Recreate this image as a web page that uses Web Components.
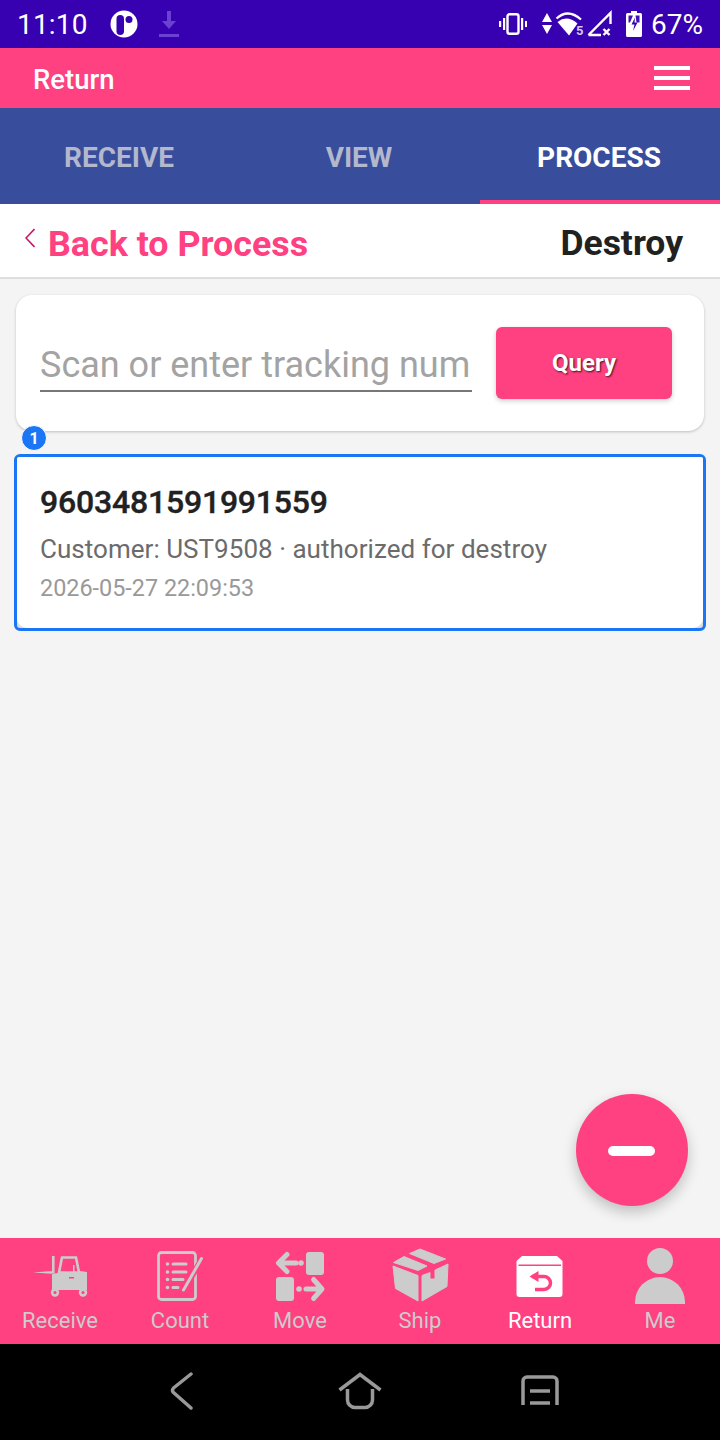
<!DOCTYPE html>
<html lang="en">
<head>
<meta charset="utf-8">
<title>Return</title>
<style>
    html, body { margin: 0; padding: 0; }
    body { font-family: Roboto, "Liberation Sans", sans-serif; background: #f4f4f4; }
    #page { display: flex; flex-direction: column; width: 720px; height: 1440px; overflow: hidden; }
    #content { flex: 1; display: flex; flex-direction: column; position: relative; min-height: 0; }
</style>
</head>
<body>
<div id="page">
    <status-bar></status-bar>
    <app-bar>Return</app-bar>
    <tab-bar></tab-bar>
    <back-header title-text="Destroy">Back to Process</back-header>
    <div id="content">
        <search-card></search-card>
        <result-card index="1" tracking="9603481591991559" info="Customer: UST9508 · authorized for destroy" time="2026-05-27 22:09:53"></result-card>
        <fab-button></fab-button>
    </div>
    <bottom-nav></bottom-nav>
    <system-nav></system-nav>
</div>

<script>
class StatusBar extends HTMLElement {
    connectedCallback() {
        this.attachShadow({ mode: "open" });
        this.shadowRoot.innerHTML = `
            <style>
                :host { display: flex; align-items: center; height: 48px; background: #3700b0; color: #fff; font-size: 28px; flex: none; }
                .time { margin-left: 17px; letter-spacing: 0.2px; }
                .left { display: flex; align-items: center; }
                .right { margin-left: auto; display: flex; align-items: center; margin-right: 17px; }
                svg { display: block; overflow: visible; }
            </style>
            <div class="left">
                <span class="time">11:10</span>
                <svg style="margin-left:22px" width="28" height="28" viewBox="0 0 28 28">
                    <circle cx="14" cy="14" r="13.500" fill="#fff"/>
                    <rect x="6.500" y="5" width="7.500" height="20" rx="3.750" fill="#3700b0"/>
                    <circle cx="19" cy="9.500" r="3.500" fill="#3700b0"/>
                </svg>
                <svg style="margin-left:21px" width="20" height="27" viewBox="0 0 20 27">
                    <path d="M8 0 h4 v10 h5 l-7 8 -7 -8 h5 z" fill="#6b41d3"/>
                    <rect y="23" width="20" height="3" fill="#6b41d3"/>
                </svg>
            </div>
            <div class="right">
                <svg width="28" height="22" viewBox="0 0 28 22">
                    <rect x="8.500" y="1.200" width="11" height="19.600" rx="2" fill="none" stroke="#fff" stroke-width="2.400"/>
                    <path d="M4 5 h2.200 v12 h-2.200 z M22 5 h2.200 v12 h-2.200 z M0 8 h2.200 v6 h-2.200 z M26 8 h2 v6 h-2 z" fill="#fff"/>
                </svg>
                <svg style="margin-left:15px" width="10" height="22" viewBox="0 0 10 22">
                    <path d="M5 0 l5 9 h-10 z M0 12 h10 l-5 9 z" fill="#fff"/>
                </svg>
                <svg style="margin-left:3px" width="29" height="26" viewBox="0 0 29 26">
                    <path d="M1.500 7.500 Q13 -3 26 8.500" fill="none" stroke="#fff" stroke-width="2.200"/>
                    <path d="M2.500 11 Q12 3.500 22.500 12.500 L14 24.500 z" fill="#fff"/>
                    <text x="21" y="23.500" font-family="Roboto, sans-serif" font-size="13" font-weight="700" fill="#d5c8f2">5</text>
                </svg>
                <svg style="margin-left:3px" width="25" height="26" viewBox="0 0 25 26">
                    <path d="M1.500 24 L23.500 2 V13 M1.500 24 H14" fill="none" stroke="#fff" stroke-width="2.400"/>
                    <path d="M16.500 18 l6 6 M22.500 18 l-6 6" stroke="#fff" stroke-width="2.400"/>
                </svg>
                <svg style="margin-left:14px" width="16" height="26" viewBox="0 0 16 26">
                    <path d="M5 0 h6 v2 h3.500 a1.500 1.500 0 0 1 1.500 1.500 v21 a1.500 1.500 0 0 1 -1.500 1.500 h-13 a1.500 1.500 0 0 1 -1.500 -1.500 v-21 a1.500 1.500 0 0 1 1.500 -1.500 h3.500 z" fill="#fff"/>
                    <path d="M2.500 4.500 h4.500 l-3 7 h-1.500 z M9.500 4.500 h4 v7 h-3 z" fill="#3f10b5"/>
                    <path d="M9 6.500 L5.500 13.500 h3 l-1.500 6.500 L11.500 11.500 h-3 z" fill="#3700b0"/>
                </svg>
                <span style="margin-left:9px">67%</span>
            </div>
        `;
    }
}

class AppBar extends HTMLElement {
    connectedCallback() {
        this.attachShadow({ mode: "open" });
        this.shadowRoot.innerHTML = `
            <style>
                :host { display: flex; align-items: center; justify-content: space-between; height: 60px; padding: 0 30px 0 33px; background: #ff4081; color: #fff; font-size: 27.500px; font-weight: 500; flex: none; }
                span { margin-top: 3px; }
                .menu { display: flex; flex-direction: column; gap: 6px; width: 36px; }
                .menu i { display: block; height: 4px; background: #fff; }
            </style>
            <span><slot></slot></span>
            <div class="menu"><i></i><i></i><i></i></div>
        `;
    }
}

class TabBar extends HTMLElement {
    connectedCallback() {
        this.attachShadow({ mode: "open" });
        this.shadowRoot.innerHTML = `
            <style>
                :host { display: grid; grid-template-columns: repeat(3, 1fr); height: 96px; background: #384d9b; flex: none; }
                div { display: flex; align-items: center; justify-content: center; box-sizing: border-box; font-size: 28px; font-weight: 700; color: #b3b8cc; padding: 2px 2px 0 0; }
                .on { color: #fff; border-bottom: 4px solid #ff4081; padding-top: 6px; }
            </style>
            <div>RECEIVE</div>
            <div>VIEW</div>
            <div class="on">PROCESS</div>
        `;
    }
}

class BackHeader extends HTMLElement {
    connectedCallback() {
        this.attachShadow({ mode: "open" });
        this.shadowRoot.innerHTML = `
            <style>
                :host { display: flex; align-items: center; box-sizing: border-box; height: 75px; padding: 0 37px 0 25px; background: #fff; border-bottom: 2px solid #dedede; flex: none; }
                svg { display: block; margin-top: -6px; }
                .back { margin-left: 13px; margin-top: 6px; font-size: 35.800px; font-weight: 700; color: #ff4081; }
                .title { margin-left: auto; margin-top: 5px; font-size: 35.500px; font-weight: 700; color: #212121; }
            </style>
            <svg width="10" height="20" viewBox="0 0 10 20"><path d="M9.500 1 L1 10 L9.500 19" fill="none" stroke="#c2186b" stroke-width="1.600"/></svg>
            <span class="back"><slot></slot></span>
            <span class="title">${this.getAttribute("title-text")}</span>
        `;
    }
}

class SearchCard extends HTMLElement {
    connectedCallback() {
        this.attachShadow({ mode: "open" });
        this.shadowRoot.innerHTML = `
            <style>
                :host { display: flex; align-items: center; box-sizing: border-box; height: 136px; margin: 16px 16px 0; padding: 0 32px 0 24px; background: #fff; border-radius: 16px; box-shadow: 0 1px 3px rgba(0,0,0,.22); flex: none; }
                .field { box-sizing: border-box; width: 432px; height: 50px; margin-top: 7px; font-size: 36px; line-height: 46px; color: #a3a3a3; white-space: nowrap; border-bottom: 2px solid #777; }
                .btn { margin-left: auto; width: 176px; height: 72px; display: flex; align-items: center; justify-content: center; background: #ff4081; border-radius: 6px; color: #fff; font-size: 24px; font-weight: 700; text-shadow: 1px 1px 2px rgba(0,0,0,.75); box-shadow: 0 2px 5px rgba(0,0,0,.2); }
            </style>
            <div class="field">Scan or enter tracking num</div>
            <div class="btn">Query</div>
        `;
    }
}

class ResultCard extends HTMLElement {
    connectedCallback() {
        this.attachShadow({ mode: "open" });
        this.shadowRoot.innerHTML = `
            <style>
                :host { display: block; position: relative; box-sizing: border-box; height: 177px; margin: 23px 14px 0; background: #ddd; border: 3px solid #1a76f5; border-radius: 6px; flex: none; }
                .body { box-sizing: border-box; height: 100%; padding: 25px 0 0 23px; background: #fff; border-radius: 2px 2px 10px 10px; }
                .num { font-size: 32px; line-height: 40px; font-weight: 500; color: #212121; -webkit-text-stroke: 0.4px #212121; letter-spacing: -0.2px; }
                .info { margin-top: 11px; font-size: 26px; line-height: 32px; color: #6b6b6b; letter-spacing: 0.03px; }
                .time { margin-top: 8px; font-size: 23.400px; line-height: 30px; color: #999; }
                .badge { position: absolute; left: 4px; top: -32px; width: 26px; height: 26px; box-sizing: border-box; border-radius: 50%; background: #1a76f5; border: 1px solid #fff; color: #fff; font-size: 16px; font-weight: 700; display: flex; align-items: center; justify-content: center; }
            </style>
            <span class="badge">${this.getAttribute("index")}</span>
            <div class="body">
                <div class="num">${this.getAttribute("tracking")}</div>
                <div class="info">${this.getAttribute("info")}</div>
                <div class="time">${this.getAttribute("time")}</div>
            </div>
        `;
    }
}

class FabButton extends HTMLElement {
    connectedCallback() {
        this.attachShadow({ mode: "open" });
        this.shadowRoot.innerHTML = `
            <style>
                :host { position: absolute; right: 32px; bottom: 32px; width: 112px; height: 112px; border-radius: 50%; background: #ff4081; box-shadow: 0 6px 14px rgba(0,0,0,.22); display: flex; align-items: center; justify-content: center; }
                i { display: block; width: 47px; height: 10px; margin: 1px 1px 0 0; border-radius: 5px; background: #fff; }
            </style>
            <i></i>
        `;
    }
}

const NAV_ICONS = {
    receive: `
        <path d="M22 10 h2.600 v17 h-2.600 z M3 26.500 L22 25 v2.800 z" fill="#ccc"/>
        <path d="M32 11.500 h14 l3 15 h-20 z" fill="none" stroke="#ccc" stroke-width="2.600"/>
        <path d="M22 27.500 L46 26 h2 v-1 h2 l7 1 v18 h-35 z" fill="#ccc"/>
        <rect x="39" y="31" width="5" height="1.500" fill="#ff4081"/>
        <rect x="43" y="19" width="1.500" height="7" fill="#ccc"/>
        <circle cx="25" cy="46.500" r="4.200" fill="#ccc"/>
        <circle cx="53" cy="46.500" r="4.200" fill="#ccc"/>
        <circle cx="25" cy="46.500" r="1.500" fill="#ff4081"/>
        <circle cx="53" cy="46.500" r="1.500" fill="#ff4081"/>`,
    count: `
        <rect x="8.500" y="6.500" width="37" height="47" rx="3" fill="none" stroke="#ccc" stroke-width="2.800"/>
        <g fill="#ccc">
            <circle cx="17.500" cy="18" r="1.800"/><circle cx="17.500" cy="26" r="1.800"/>
            <circle cx="17.500" cy="33.500" r="1.800"/><circle cx="17.500" cy="41.500" r="1.800"/>
        </g>
        <path d="M23 18 h13 M23 26 h13 M23 33.500 h10 M23 41.500 h5" stroke="#ccc" stroke-width="3" stroke-linecap="round"/>
        <path d="M52 13 L34 43" stroke="#ff4081" stroke-width="6"/>
        <path d="M51.500 12.500 L33.500 44" stroke="#ccc" stroke-width="3" stroke-linecap="round"/>`,
    move: `
        <rect x="36" y="6" width="18" height="23" rx="3" fill="#ccc"/>
        <rect x="6" y="31" width="18" height="24" rx="3" fill="#ccc"/>
        <path d="M26 17 H9 M17 8.500 L8.500 17 L17 25.500" fill="none" stroke="#ccc" stroke-width="5" stroke-linecap="round" stroke-linejoin="round"/>
        <circle cx="31" cy="17" r="2.800" fill="#ccc"/>
        <circle cx="29" cy="43" r="2.800" fill="#ccc"/>
        <path d="M36 43 H51 M43.500 33.500 L52 43 L43.500 52.500" fill="none" stroke="#ccc" stroke-width="5" stroke-linecap="round" stroke-linejoin="round"/>`,
    ship: `
        <g fill="#ccc" stroke="#ccc" stroke-width="1" stroke-linejoin="round">
            <path d="M19.500 7.500 L30 3 L55.500 13 L44 17.500 z"/>
            <path d="M3.500 16.500 L14 10.500 L37 20 L28 24.500 z"/>
            <path d="M3 20 L28 29.500 V55 L5.500 42.500 z"/>
            <path d="M32 29.500 L40 26.500 V33 H45 V24 L58 18 L57 40.500 L32 55 z"/>
        </g>`,
    return: `
        <path d="M12 10 H47 L52.500 15 V48 a3 3 0 0 1 -3 3 H9.500 a3 3 0 0 1 -3 -3 V15 z" fill="#fff"/>
        <path d="M8.500 19.300 H51" stroke="#ff4081" stroke-width="1.600"/>
        <path d="M22 30.500 H34 a6.500 6.500 0 0 1 0 13 H25" fill="none" stroke="#ff4081" stroke-width="3.500"/>
        <path d="M19.500 30.500 L28.500 25 V36 z" fill="#ff4081"/>`,
    me: `
        <circle cx="30" cy="15" r="13" fill="#ccc"/>
        <path d="M5 58 V56 A25 25 0 0 1 55 56 V58 z" fill="#ccc"/>`
};

class NavItem extends HTMLElement {
    connectedCallback() {
        this.attachShadow({ mode: "open" });
        const active = this.hasAttribute("active");
        this.shadowRoot.innerHTML = `
            <style>
                :host { display: flex; flex-direction: column; align-items: center; color: ${active ? "#fff" : "#ccc"}; }
                svg { display: block; flex: none; }
                span { margin-top: 2px; font-size: 22px; line-height: 26px; }
            </style>
            <svg width="60" height="60" viewBox="0 0 60 60">${NAV_ICONS[this.getAttribute("icon")]}</svg>
            <span><slot></slot></span>
        `;
    }
}

class BottomNav extends HTMLElement {
    connectedCallback() {
        this.attachShadow({ mode: "open" });
        this.shadowRoot.innerHTML = `
            <style>
                :host { display: grid; grid-template-columns: repeat(6, 1fr); box-sizing: border-box; height: 106px; padding-top: 8px; background: #ff4081; flex: none; }
            </style>
            <nav-item icon="receive">Receive</nav-item>
            <nav-item icon="count">Count</nav-item>
            <nav-item icon="move">Move</nav-item>
            <nav-item icon="ship">Ship</nav-item>
            <nav-item icon="return" active>Return</nav-item>
            <nav-item icon="me">Me</nav-item>
        `;
    }
}

class SystemNav extends HTMLElement {
    connectedCallback() {
        this.attachShadow({ mode: "open" });
        this.shadowRoot.innerHTML = `
            <style>
                :host { display: grid; grid-template-columns: repeat(3, 180px); justify-content: center; align-items: center; height: 96px; background: #000; flex: none; }
                svg { display: block; justify-self: center; fill: none; stroke: #999; stroke-width: 3.500; margin-top: -3px; }
            </style>
            <svg style="margin-left:4px" width="26" height="38" viewBox="0 0 26 38" stroke-linecap="round" stroke-linejoin="round">
                <path d="M22 2 L4.500 16 Q2.500 18.500 4.500 20.500 L22 36"/>
            </svg>
            <svg width="44" height="38" viewBox="0 0 44 38">
                <path d="M1.500 18 L22 2.500 L42.500 18"/>
                <path d="M9.500 17 V28 a7.500 7.500 0 0 0 7.500 7.500 H27 a7.500 7.500 0 0 0 7.500 -7.500 V17"/>
            </svg>
            <svg width="38" height="32" viewBox="0 0 38 32">
                <path d="M2 30 V6 a4 4 0 0 1 4 -4 H32 a4 4 0 0 1 4 4 V30"/>
                <path d="M9 16 H29 M9 28 H29"/>
            </svg>
        `;
    }
}

customElements.define("status-bar", StatusBar);
customElements.define("app-bar", AppBar);
customElements.define("tab-bar", TabBar);
customElements.define("back-header", BackHeader);
customElements.define("search-card", SearchCard);
customElements.define("result-card", ResultCard);
customElements.define("fab-button", FabButton);
customElements.define("nav-item", NavItem);
customElements.define("bottom-nav", BottomNav);
customElements.define("system-nav", SystemNav);
</script>
</body>
</html>
